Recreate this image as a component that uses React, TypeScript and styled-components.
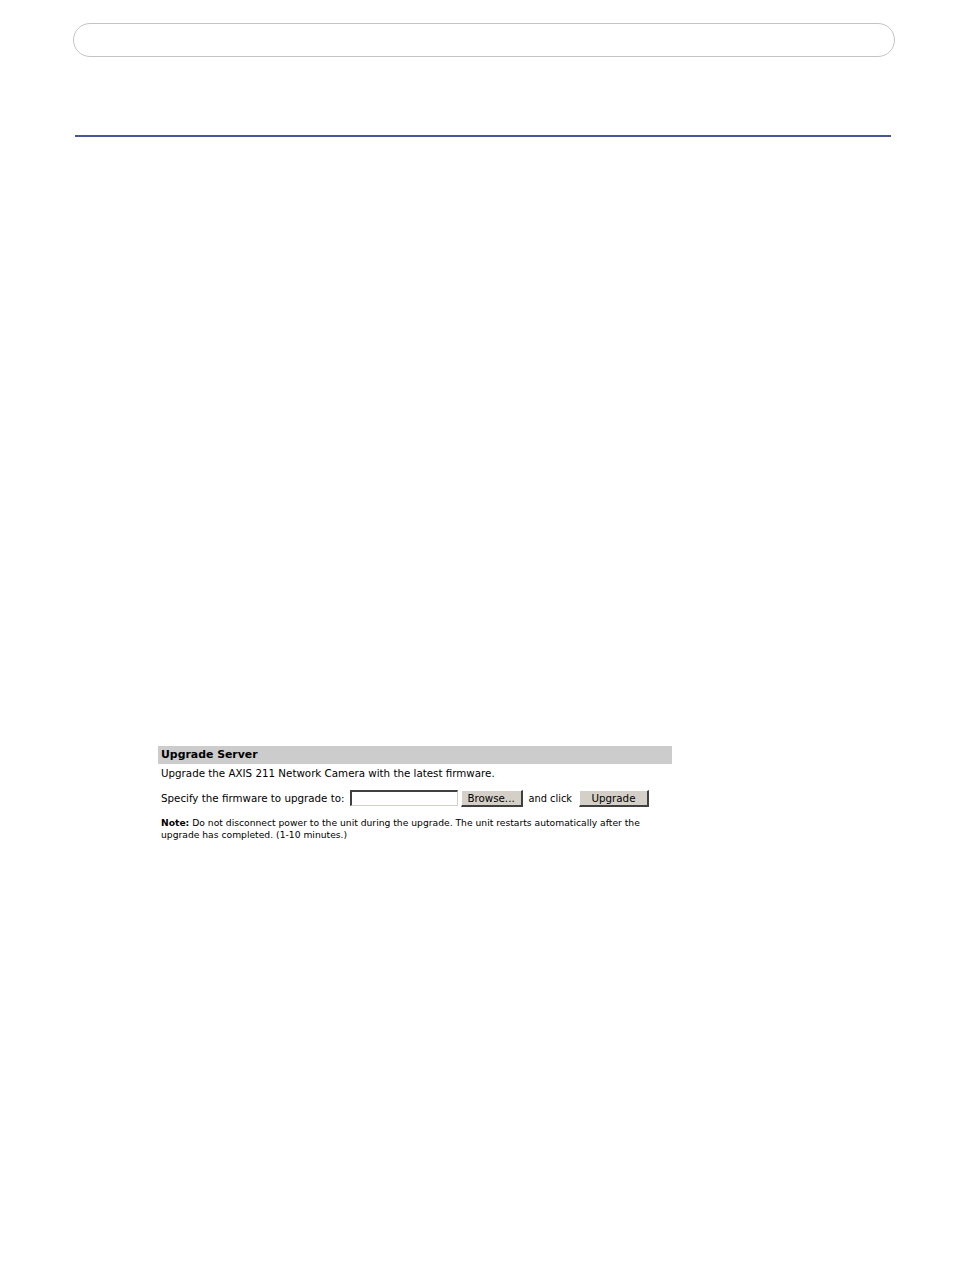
import React from "react";
import styled, { createGlobalStyle } from "styled-components";

const Global = createGlobalStyle`
  html, body { margin: 0; padding: 0; background: #ffffff; }
  body { font-family: "DejaVu Sans", Verdana, sans-serif; color: #000; }
`;

const Page = styled.div`
  width: 954px;
  height: 1263px;
  box-sizing: border-box;
  padding-top: 23px;
  display: flex;
  flex-direction: column;
`;

const HeaderPill = styled.div`
  margin-left: 73px;
  width: 822px;
  height: 34px;
  box-sizing: border-box;
  border: 1px solid #c4c4c4;
  border-radius: 17px;
`;

const Rule = styled.div`
  margin-top: 78px;
  margin-left: 75px;
  width: 816px;
  height: 2px;
  background: #4a5596;
`;

const Panel = styled.section`
  margin-top: 609px;
  margin-left: 158px;
  width: 514px;
  display: flex;
  flex-direction: column;
`;

const PanelTitle = styled.div`
  background: #cccccc;
  height: 18px;
  line-height: 18px;
  padding-left: 3px;
  font-size: 10.9px;
  font-weight: bold;
`;

const BodyText = styled.div`
  padding-left: 3px;
  margin-top: 2px;
  font-size: 10.3px;
  line-height: 14px;
`;

const FormRow = styled.div`
  display: flex;
  align-items: center;
  padding-left: 3px;
  margin-top: 9px;
  font-size: 10.3px;
  height: 18px;
`;

const FileInput = styled.div`
  margin-left: 5px;
  width: 108px;
  height: 16px;
  box-sizing: border-box;
  border-style: solid;
  border-width: 2px 1px 1px 2px;
  border-color: #404040 #d4d0c8 #d4d0c8 #404040;
  background: #fff;
`;

const Button = styled.button<{ $w: number; $ml: number }>`
  margin-left: ${(p) => p.$ml}px;
  width: ${(p) => p.$w}px;
  height: 17px;
  box-sizing: border-box;
  padding: 0;
  background: #d4d0c8;
  border-style: solid;
  border-width: 1px 2px 2px 1px;
  border-color: #ffffff #404040 #404040 #ffffff;
  font-family: "DejaVu Sans", Verdana, sans-serif;
  font-size: 10.3px;
  color: #000;
`;

const Inline = styled.span<{ $ml: number }>`
  margin-left: ${(p) => p.$ml}px;
  font-size: 9.8px;
`;

const Note = styled.p`
  margin: 10px 0 0 0;
  padding-left: 3px;
  font-size: 9.2px;
  line-height: 12px;
`;

export default function App() {
  return (
    <>
      <Global />
      <Page>
        <HeaderPill />
        <Rule />
        <Panel>
          <PanelTitle>Upgrade Server</PanelTitle>
          <BodyText>Upgrade the AXIS 211 Network Camera with the latest firmware.</BodyText>
          <FormRow>
            <span>Specify the firmware to upgrade to:</span>
            <FileInput />
            <Button $w={62} $ml={3}>Browse...</Button>
            <Inline $ml={6}>and click</Inline>
            <Button $w={70} $ml={7}>Upgrade</Button>
          </FormRow>
          <Note>
            <b>Note:</b> Do not disconnect power to the unit during the upgrade. The unit restarts automatically after the
            <br />
            upgrade has completed. (1-10 minutes.)
          </Note>
        </Panel>
      </Page>
    </>
  );
}
